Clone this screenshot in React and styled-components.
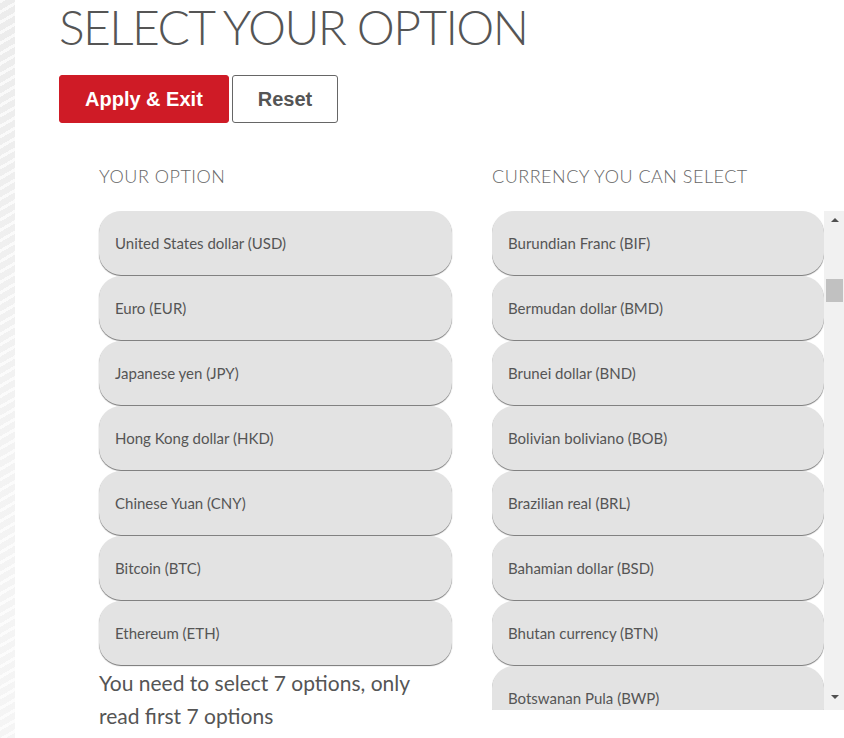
import styled, { createGlobalStyle } from "styled-components";

const GlobalStyle = createGlobalStyle`
  html, body {
    margin: 0;
    padding: 0;
    background: #fff;
  }
  body {
    font-family: Lato, "Open Sans", sans-serif;
    color: #555;
  }
`;

const Page = styled.div`
  display: flex;
  min-height: 738px;
  background: #fff;
  overflow: hidden;
`;

const SideStrip = styled.div`
  width: 15px;
  flex-shrink: 0;
  background:
    repeating-linear-gradient(150deg, rgba(255, 255, 255, 0.7) 0 3px, transparent 3px 9px),
    linear-gradient(180deg, #ececec, #f3f3f3 60%, #f5f5f5);
`;

const Main = styled.main`
  flex: 1;
  display: flex;
  flex-direction: column;
  padding-left: 44px;
`;

const Title = styled.h1`
  margin: 0;
  font-family: Lato, sans-serif;
  font-weight: 300;
  font-size: 48px;
  line-height: 54px;
  letter-spacing: -1.6px;
  color: #555;
  white-space: nowrap;
`;

const Actions = styled.div`
  display: flex;
  gap: 3px;
  margin-top: 21px;
`;

const Button = styled.button`
  height: 48px;
  padding: 0 25px;
  border-radius: 3px;
  border: 1px solid ${(p) => (p.$primary ? "#cf1b26" : "#666")};
  background: ${(p) => (p.$primary ? "#cf1b26" : "#fff")};
  color: ${(p) => (p.$primary ? "#fff" : "#555")};
  font-family: "Liberation Sans", Arial, sans-serif;
  font-weight: 700;
  font-size: 20px;
  cursor: pointer;
`;

const Columns = styled.div`
  display: grid;
  grid-template-columns: 353px 353px;
  column-gap: 40px;
  margin-left: 40px;
  margin-top: 42px;
`;

const Column = styled.section`
  display: flex;
  flex-direction: column;
`;

const ColumnLabel = styled.h2`
  margin: 0 0 24px;
  font-family: Lato, sans-serif;
  font-weight: 300;
  font-size: 18px;
  line-height: 22px;
  letter-spacing: 0.5px;
  color: #666;
`;

const List = styled.ul`
  list-style: none;
  margin: 0;
  padding: 0 0 ${(p) => (p.$scroll ? "0" : "1px")};
  display: flex;
  flex-direction: column;
  gap: 1px;
  flex: 1;
  min-width: 0;
  overflow: ${(p) => (p.$scroll ? "hidden" : "visible")};
`;

const Item = styled.li`
  flex-shrink: 0;
  height: 64px;
  display: flex;
  align-items: center;
  padding-left: 16px;
  border-radius: 22px;
  background: #e3e3e3;
  box-shadow: 0 1px 1px rgba(0, 0, 0, 0.55);
  font-family: Lato, sans-serif;
  font-size: 15px;
  color: #555;
`;

const Note = styled.p`
  margin: 0;
  font-family: Lato, sans-serif;
  font-size: 21px;
  line-height: 33px;
  color: #555;
  padding-right: 20px;
`;

const ScrollArea = styled.div`
  display: flex;
  height: 499px;
`;

const ScrollTrack = styled.div`
  width: 21px;
  flex-shrink: 0;
  background: #f1f1f1;
  display: flex;
  flex-direction: column;
  align-items: center;
`;

const Arrow = styled.span`
  width: 0;
  height: 0;
  margin: ${(p) => (p.$down ? "auto 0 11px" : "7px 0 0")};
  border-left: 4px solid transparent;
  border-right: 4px solid transparent;
  ${(p) =>
    p.$down
      ? "border-top: 4px solid #505050;"
      : "border-bottom: 4px solid #505050;"}
`;

const Thumb = styled.div`
  width: 17px;
  height: 23px;
  margin-top: 57px;
  background: #c1c1c1;
`;

const yourOptions = [
  "United States dollar (USD)",
  "Euro (EUR)",
  "Japanese yen (JPY)",
  "Hong Kong dollar (HKD)",
  "Chinese Yuan (CNY)",
  "Bitcoin (BTC)",
  "Ethereum (ETH)",
];

const available = [
  "Burundian Franc (BIF)",
  "Bermudan dollar (BMD)",
  "Brunei dollar (BND)",
  "Bolivian boliviano (BOB)",
  "Brazilian real (BRL)",
  "Bahamian dollar (BSD)",
  "Bhutan currency (BTN)",
  "Botswanan Pula (BWP)",
];

export default function App() {
  return (
    <>
      <GlobalStyle />
      <Page>
        <SideStrip />
        <Main>
          <Title>SELECT YOUR OPTION</Title>
          <Actions>
            <Button $primary>Apply &amp; Exit</Button>
            <Button>Reset</Button>
          </Actions>
          <Columns>
            <Column>
              <ColumnLabel>YOUR OPTION</ColumnLabel>
              <List>
                {yourOptions.map((o) => (
                  <Item key={o}>{o}</Item>
                ))}
              </List>
              <Note>You need to select 7 options, only read first 7 options</Note>
            </Column>
            <Column>
              <ColumnLabel>CURRENCY YOU CAN SELECT</ColumnLabel>
              <ScrollArea>
                <List $scroll>
                  {available.map((o) => (
                    <Item key={o}>{o}</Item>
                  ))}
                </List>
                <ScrollTrack>
                  <Arrow />
                  <Thumb />
                  <Arrow $down />
                </ScrollTrack>
              </ScrollArea>
            </Column>
          </Columns>
        </Main>
      </Page>
    </>
  );
}
